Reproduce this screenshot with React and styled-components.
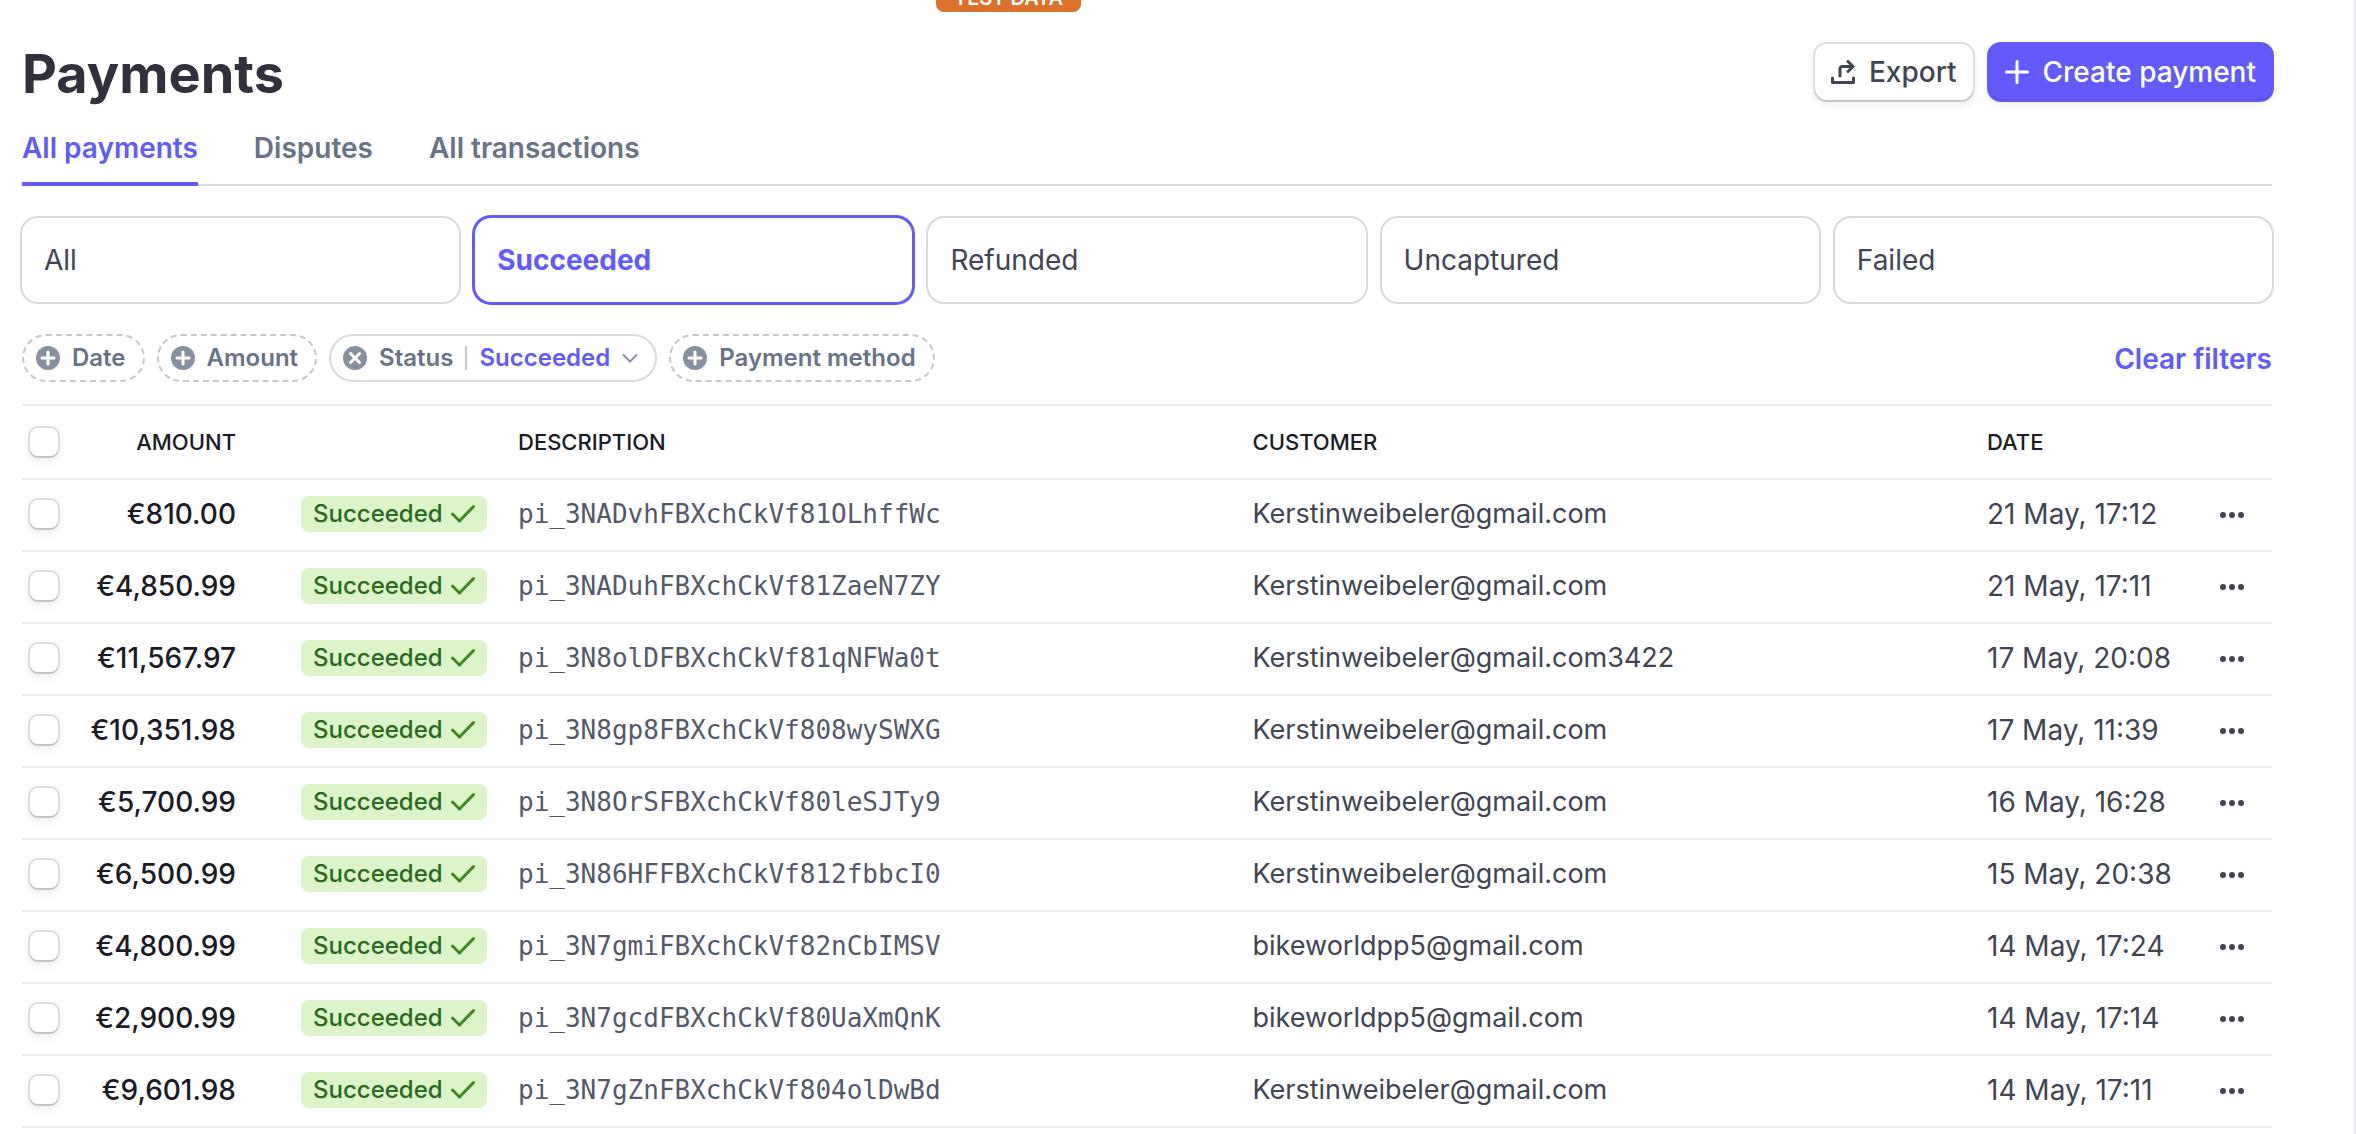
import React from "react";
import styled, { createGlobalStyle, css } from "styled-components";

const sans = `Inter, "Liberation Sans", sans-serif`;
const purple = "#625afa";

const Global = createGlobalStyle`
  *, *::before, *::after { box-sizing: border-box; }
  body { margin: 0; background: #fff; color: #414552; font-family: ${sans}; font-size: 28px; line-height: 40px; }
  button { font-family: inherit; border: 0; background: none; padding: 0; margin: 0; cursor: pointer; }
`;

const Page = styled.div`
  position: relative;
  min-height: 100vh;
  overflow: hidden;
  padding: 42px 82px 6px 22px;
  border-right: 2px solid #ebebf0;
`;

const TestBadge = styled.span`
  position: absolute;
  top: -20px;
  left: 936px;
  padding: 6px 18px 2px;
  border-radius: 8px;
  background: #dc702d;
  color: #fff;
  font-size: 20px;
  line-height: 24px;
  font-weight: 600;
`;

const Header = styled.header`
  display: flex;
  align-items: center;
  justify-content: space-between;
  height: 60px;
`;

const Title = styled.h1`
  margin: 0;
  padding-top: 4px;
  color: #30313d;
  font-size: 54px;
  line-height: 64px;
  font-weight: 700;
`;

const Actions = styled.div`
  display: flex;
  gap: 16px;
`;

const Button = styled.button`
  display: flex;
  align-items: center;
  gap: 14px;
  height: 56px;
  padding: 0 16px;
  border-radius: 12px;
  font-size: 28px;
  line-height: 40px;
  font-weight: 500;
  ${({ $primary }) =>
    $primary
      ? css`
          background: ${purple};
          color: #fff;
          box-shadow: 0 0 0 2px ${purple}, inset 0 -1px 0 #564fdc, 0 4px 8px 2px rgba(0, 0, 0, 0.06);
        `
      : css`
          background: #fff;
          color: #414552;
          box-shadow: 0 2px 0 0 rgba(0, 0, 0, 0.12), 0 0 0 2px #dedee0, 0 4px 8px 2px rgba(0, 0, 0, 0.06);
        `}
`;

const Tabs = styled.nav`
  display: flex;
  gap: 56px;
  margin-top: 22px;
  box-shadow: inset 0 -2px 0 #d5dbe1;
`;

const Tab = styled.a`
  height: 62px;
  padding-top: 4px;
  border-bottom: 4px solid ${({ $active }) => ($active ? purple : "transparent")};
  color: ${({ $active }) => ($active ? purple : "#687385")};
  font-weight: 600;
  text-decoration: none;
`;

const Cards = styled.div`
  display: grid;
  grid-template-columns: repeat(5, 1fr);
  gap: 16px;
  margin-top: 32px;
`;

const Card = styled.button`
  height: 84px;
  padding: 0 22px;
  border-radius: 16px;
  text-align: left;
  font-size: 28px;
  line-height: 40px;
  font-weight: ${({ $active }) => ($active ? 700 : 400)};
  color: ${({ $active }) => ($active ? purple : "#414552")};
  box-shadow: 0 0 0 ${({ $active }) => ($active ? `3px ${purple}` : "2px #d5dbe1")};
`;

const Filters = styled.div`
  display: flex;
  align-items: center;
  gap: 12px;
  margin-top: 32px;
`;

const Chip = styled.button`
  display: flex;
  align-items: center;
  gap: 12px;
  height: 48px;
  padding: 0 17px 0 12px;
  border: 2px ${({ $set }) => ($set ? "solid #d5dbe1" : "dashed #c0c8d2")};
  border-radius: 24px;
  color: #687385;
  font-size: 24px;
  line-height: 32px;
  font-weight: 600;
`;

const ChipValue = styled.span`
  display: flex;
  align-items: center;
  gap: 12px;
  padding-left: 14px;
  color: ${purple};
  background: linear-gradient(#c0c8d2, #c0c8d2) left center / 2px 24px no-repeat;
`;

const ClearButton = styled.button`
  margin-left: auto;
  padding-top: 2px;
  color: ${purple};
  font-size: 28px;
  line-height: 40px;
  font-weight: 600;
`;

const Table = styled.table`
  width: 100%;
  margin-top: 22px;
  table-layout: fixed;
  border-collapse: separate;
  border-spacing: 0;
  border-top: 2px solid #ebebf0;
`;

const Col = styled.col`
  width: ${({ $w }) => ($w ? `${$w}px` : "auto")};
`;

const Th = styled.th`
  height: 74px;
  padding: 0;
  border-bottom: 2px solid #ebebf0;
  color: #1a1b25;
  font-size: 22px;
  line-height: 32px;
  font-weight: 500;
  text-align: ${({ $right }) => ($right ? "right" : "left")};
`;

const Td = styled.td`
  height: 72px;
  padding: 0 0 2px;
  border-bottom: 2px solid #ebebf0;
  white-space: nowrap;
`;

const AmountCell = styled(Td)`
  color: #1a1b25;
  font-weight: 500;
  text-align: right;
`;

const StatusCell = styled(Td)`
  padding-left: 65px;
`;

const IdCell = styled(Td)`
  color: #545969;
  font-family: "DejaVu Sans Mono", monospace;
  font-size: 26px;
`;

const CustomerCell = styled(Td)`
  font-size: 27px;
`;

const MoreCell = styled(Td)`
  padding-bottom: 0;
`;

const Check = styled.input`
  display: block;
  appearance: none;
  width: 28px;
  height: 28px;
  margin: 0 0 0 8px;
  border-radius: 8px;
  background: #fff;
  box-shadow: 0 2px 0 0 rgba(0, 0, 0, 0.12), 0 0 0 2px #dedee0, 0 4px 8px 2px rgba(0, 0, 0, 0.06);
`;

const Badge = styled.span`
  display: flex;
  align-items: center;
  gap: 8px;
  width: fit-content;
  height: 36px;
  padding: 0 12px;
  border-radius: 8px;
  background: #dcf5c8;
  color: #2b6a1e;
  font-size: 24px;
  line-height: 36px;
  font-weight: 500;
`;

const MoreButton = styled.button`
  display: flex;
  margin-left: auto;
  margin-right: 28px;
  color: #414552;
`;

const Icon = styled.svg`
  display: block;
  flex: none;
  width: 24px;
  height: 24px;
  fill: none;
  stroke: currentColor;
  stroke-linecap: round;
  stroke-linejoin: round;
`;

const ExportIcon = () => (
  <Icon viewBox="0 0 24 24" strokeWidth="3" aria-hidden="true">
    <path d="M1.500 18v4.500h21V18M9 16V9a2.500 2.500 0 0 1 2.500-2.500H22M17 1.500l5 5-5 5" />
  </Icon>
);

const PlusIcon = () => (
  <Icon viewBox="0 0 24 24" strokeWidth="3" aria-hidden="true">
    <path d="M12 1.500v21M1.500 12h21" />
  </Icon>
);

const CircleIcon = ({ remove }) => (
  <Icon viewBox="0 0 24 24" strokeWidth="3" aria-hidden="true">
    <circle cx="12" cy="12" r="12" fill="#87909f" stroke="none" />
    <path stroke="#fff" d={remove ? "M7.500 7.500l9 9M16.500 7.500l-9 9" : "M12 6v12M6 12h12"} />
  </Icon>
);

const Caret = styled(Icon)`
  width: 16px;
  height: 16px;
  color: #87909f;
`;

const CheckMark = styled(Icon)`
  color: #448427;
`;

const tabs = ["All payments", "Disputes", "All transactions"];
const statuses = ["All", "Succeeded", "Refunded", "Uncaptured", "Failed"];
const payments = [
  ["€810.00", "pi_3NADvhFBXchCkVf81OLhffWc", "Kerstinweibeler@gmail.com", "21 May, 17:12"],
  ["€4,850.99", "pi_3NADuhFBXchCkVf81ZaeN7ZY", "Kerstinweibeler@gmail.com", "21 May, 17:11"],
  ["€11,567.97", "pi_3N8olDFBXchCkVf81qNFWa0t", "Kerstinweibeler@gmail.com3422", "17 May, 20:08"],
  ["€10,351.98", "pi_3N8gp8FBXchCkVf808wySWXG", "Kerstinweibeler@gmail.com", "17 May, 11:39"],
  ["€5,700.99", "pi_3N8OrSFBXchCkVf80leSJTy9", "Kerstinweibeler@gmail.com", "16 May, 16:28"],
  ["€6,500.99", "pi_3N86HFFBXchCkVf812fbbcI0", "Kerstinweibeler@gmail.com", "15 May, 20:38"],
  ["€4,800.99", "pi_3N7gmiFBXchCkVf82nCbIMSV", "bikeworldpp5@gmail.com", "14 May, 17:24"],
  ["€2,900.99", "pi_3N7gcdFBXchCkVf80UaXmQnK", "bikeworldpp5@gmail.com", "14 May, 17:14"],
  ["€9,601.98", "pi_3N7gZnFBXchCkVf804olDwBd", "Kerstinweibeler@gmail.com", "14 May, 17:11"],
];

export default function App() {
  return (
    <>
      <Global />
      <Page>
        <TestBadge>TEST DATA</TestBadge>
        <Header>
          <Title>Payments</Title>
          <Actions>
            <Button type="button"><ExportIcon />Export</Button>
            <Button type="button" $primary><PlusIcon />Create payment</Button>
          </Actions>
        </Header>
        <Tabs>
          {tabs.map((tab, i) => (
            <Tab key={tab} href="#" $active={i === 0}>{tab}</Tab>
          ))}
        </Tabs>
        <Cards>
          {statuses.map((status) => (
            <Card key={status} type="button" $active={status === "Succeeded"}>{status}</Card>
          ))}
        </Cards>
        <Filters>
          <Chip type="button"><CircleIcon />Date</Chip>
          <Chip type="button"><CircleIcon />Amount</Chip>
          <Chip type="button" $set>
            <CircleIcon remove />
            Status
            <ChipValue>
              Succeeded
              <Caret viewBox="0 0 16 16" strokeWidth="2" aria-hidden="true">
                <path d="M1.500 5l6.500 6.500L14.500 5" />
              </Caret>
            </ChipValue>
          </Chip>
          <Chip type="button"><CircleIcon />Payment method</Chip>
          <ClearButton type="button">Clear filters</ClearButton>
        </Filters>
        <Table>
          <colgroup>
            <Col $w={46} />
            <Col $w={168} />
            <Col $w={282} />
            <Col />
            <Col />
            <Col $w={197} />
            <Col $w={88} />
          </colgroup>
          <thead>
            <tr>
              <Th><Check type="checkbox" aria-label="Select all payments" /></Th>
              <Th $right>AMOUNT</Th>
              <Th />
              <Th>DESCRIPTION</Th>
              <Th>CUSTOMER</Th>
              <Th>DATE</Th>
              <Th />
            </tr>
          </thead>
          <tbody>
            {payments.map(([amount, id, customer, date]) => (
              <tr key={id}>
                <Td><Check type="checkbox" aria-label={`Select ${id}`} /></Td>
                <AmountCell>{amount}</AmountCell>
                <StatusCell>
                  <Badge>
                    Succeeded
                    <CheckMark viewBox="0 0 24 24" strokeWidth="3" aria-hidden="true">
                      <path d="M1.500 12l7 7L22.500 4.500" />
                    </CheckMark>
                  </Badge>
                </StatusCell>
                <IdCell>{id}</IdCell>
                <CustomerCell>{customer}</CustomerCell>
                <Td>{date}</Td>
                <MoreCell>
                  <MoreButton type="button" aria-label="More actions">
                    <Icon viewBox="0 0 24 24" aria-hidden="true">
                      <g fill="currentColor" stroke="none">
                        <circle cx="3" cy="12" r="3" />
                        <circle cx="12" cy="12" r="3" />
                        <circle cx="21" cy="12" r="3" />
                      </g>
                    </Icon>
                  </MoreButton>
                </MoreCell>
              </tr>
            ))}
          </tbody>
        </Table>
      </Page>
    </>
  );
}
